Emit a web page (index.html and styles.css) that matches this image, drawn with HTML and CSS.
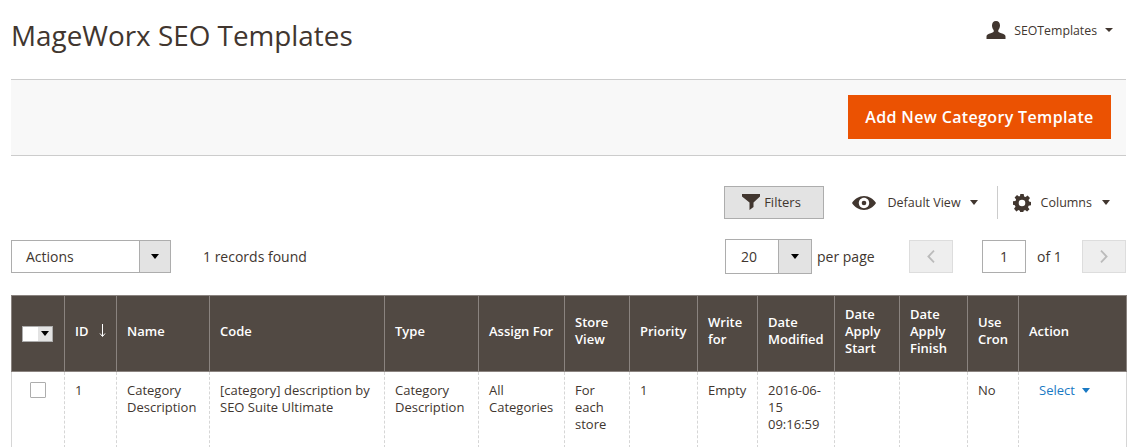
FILE: index.html
```html
<!DOCTYPE html>
<html lang="en">
<head>
<meta charset="utf-8">
<title>MageWorx SEO Templates</title>
<link rel="stylesheet" href="styles.css">
</head>
<body>
<div class="page">
  <header class="top">
    <h1 class="title">MageWorx SEO Templates</h1>
    <div class="user">
      <svg class="user-icon" width="20" height="18" viewBox="0 0 20 18"><path fill="#41362f" d="M10 0c2.600 0 4 1.900 4 4.400 0 1.900-.7 3.500-1.700 4.500v1.700c0 .6 1 1 3 1.700 2.400.8 4.200 1.500 4.200 3.100V18H.5v-2.600c0-1.600 1.800-2.300 4.200-3.100 2-.7 3-1.100 3-1.700V8.900C6.700 7.900 6 6.300 6 4.400 6 1.900 7.400 0 10 0z"/></svg>
      <span class="user-name">SEOTemplates</span>
      <span class="caret caret-small"></span>
    </div>
  </header>

  <div class="actions-bar">
    <button class="primary">Add New Category Template</button>
  </div>

  <div class="tools">
    <button class="filters">
      <svg width="18" height="16" viewBox="0 0 18 16"><path fill="#41362f" d="M0 0h18v2.500l-6.500 6V13L7.500 16V8.500L0 2.500z"/></svg>
      <span>Filters</span>
    </button>
    <div class="view">
      <svg width="24" height="14" viewBox="0 0 24 14"><path fill="#41362f" fill-rule="evenodd" d="M12 0c5 0 9.500 3 12 7-2.500 4-7 7-12 7S2.500 11 0 7c2.500-4 7-7 12-7zm0 1.800C9.100 1.800 6.800 4.100 6.800 7s2.300 5.200 5.200 5.200 5.200-2.300 5.200-5.200S14.900 1.800 12 1.800z"/><circle cx="12" cy="7" r="2.300" fill="#41362f"/></svg>
      <span class="view-label">Default View</span>
      <span class="caret"></span>
    </div>
    <div class="columns">
      <svg width="18" height="18" viewBox="0 0 18 18"><path fill="#41362f" fill-rule="evenodd" d="M7.300 0h3.400l.4 2.500 1.500.6 2-1.500 2.400 2.400-1.500 2 .6 1.500 2 .4v3.400l-2.500.4-.6 1.500 1.500 2-2.400 2.400-2-1.500-1.500.6-.4 2.500H7.300l-.4-2.500-1.500-.6-2 1.500L1 14.800l1.500-2-.6-1.500L0 10.800V7.300l2.500-.4.600-1.500-1.500-2L4 1l2 1.500 1-.5zM9 5.700a3.300 3.300 0 1 0 0 6.600 3.300 3.300 0 0 0 0-6.600z"/></svg>
      <span class="columns-label">Columns</span>
      <span class="caret"></span>
    </div>
  </div>

  <div class="pager-row">
    <div class="select select-actions">
      <span class="select-value">Actions</span>
      <span class="select-btn"><span class="caret caret-black"></span></span>
    </div>
    <span class="records">1 records found</span>
    <div class="pager">
      <div class="select select-page">
        <span class="select-value">20</span>
        <span class="select-btn"><span class="caret caret-black"></span></span>
      </div>
      <span class="per-page">per page</span>
      <button class="nav nav-prev"><svg width="8" height="13" viewBox="0 0 8 13"><path fill="none" stroke="#bbb" stroke-width="1.800" d="M7 .7 1.400 6.500 7 12.300"/></svg></button>
      <span class="page-input">1</span>
      <span class="of">of 1</span>
      <button class="nav nav-next"><svg width="8" height="13" viewBox="0 0 8 13"><path fill="none" stroke="#bbb" stroke-width="1.800" d="M1 .7 6.600 6.500 1 12.300"/></svg></button>
    </div>
  </div>

  <table class="grid">
    <colgroup>
      <col class="c-check"><col class="c-id"><col class="c-name"><col class="c-code"><col class="c-type"><col class="c-assign"><col class="c-store"><col class="c-priority"><col class="c-write"><col class="c-modified"><col class="c-start"><col class="c-finish"><col class="c-cron"><col class="c-action">
    </colgroup>
    <thead>
      <tr>
        <th class="th-check"><span class="mass"><span class="mass-box"></span><span class="mass-btn"><span class="caret caret-mass"></span></span></span></th>
        <th><span class="id-head">ID<svg class="sort" width="7" height="13" viewBox="0 0 7 13"><path fill="none" stroke="#fff" d="M3.500 0v12M1 9.500l2.500 3 2.500-3"/></svg></span></th>
        <th>Name</th>
        <th>Code</th>
        <th>Type</th>
        <th>Assign For</th>
        <th>Store View</th>
        <th>Priority</th>
        <th>Write for</th>
        <th>Date Modified</th>
        <th>Date Apply Start</th>
        <th>Date Apply Finish</th>
        <th>Use Cron</th>
        <th>Action</th>
      </tr>
    </thead>
    <tbody>
      <tr>
        <td class="td-check"><span class="checkbox"></span></td>
        <td>1</td>
        <td>Category Description</td>
        <td>[category] description by SEO Suite Ultimate</td>
        <td>Category Description</td>
        <td>All Categories</td>
        <td>For each store</td>
        <td>1</td>
        <td>Empty</td>
        <td>2016-06-15 09:16:59</td>
        <td></td>
        <td></td>
        <td>No</td>
        <td class="td-action"><a class="select-link" href="#">Select<span class="caret caret-blue"></span></a></td>
      </tr>
    </tbody>
  </table>
</div>
</body>
</html>
```
FILE: styles.css
```css
* { box-sizing: border-box; }
html, body { margin: 0; height: 447px; overflow: hidden; background: #fff; }
body { font-family: "Open Sans", sans-serif; font-size: 14px; color: #41362f; }
.page { padding: 0 12px 0 11px; }
button { font-family: inherit; padding: 0; cursor: pointer; }

.caret { display: inline-block; width: 0; height: 0; border-style: solid; border-width: 5px 4.500px 0; border-color: #41362f transparent transparent; }
.caret-small { border-width: 4px 4px 0; }
.caret-black { border-width: 5px 4px 0; border-color: #000 transparent transparent; }

.top { height: 79px; display: flex; justify-content: space-between; padding: 16px 13px 0 0; }
.title { margin: 0; font-size: 27.850px; font-weight: 400; line-height: 38px; color: #41362f; }
.user { display: flex; align-items: center; height: 28px; }
.user-icon { margin-right: 8px; }
.user-name { font-size: 12.300px; color: #41362f; margin-right: 8px; }

.actions-bar { height: 77px; border-top: 1px solid #ccc; border-bottom: 1px solid #ccc; background: #f8f8f8; display: flex; justify-content: flex-end; padding: 15px 15px 0 0; }
.primary { width: 263px; height: 44px; background: #eb5202; border: 0; color: #fff; font-size: 16px; font-weight: 600; letter-spacing: .35px; }

.tools { display: flex; align-items: center; justify-content: flex-end; height: 33px; margin-top: 30px; padding-right: 16px; }
.filters { width: 100px; height: 33px; background: #e3e3e3; border: 1px solid #adadad; display: flex; align-items: center; justify-content: center; gap: 4px; padding: 0 4px 2px 0; font-size: 13px; color: #41362f; margin-right: 28px; }
.view { display: flex; align-items: center; height: 33px; padding-right: 19px; border-right: 1px solid #ccc; }
.view-label { font-size: 12.500px; margin: 0 9px 0 12px; }
.columns { display: flex; align-items: center; height: 33px; padding-left: 15px; }
.columns-label { font-size: 12.500px; margin: 0 10px 0 10px; }

.pager-row { display: flex; align-items: center; height: 33px; margin-top: 21px; }
.select { display: flex; height: 33px; border: 1px solid #adadad; background: #fff; }
.select-value { flex: 1; display: flex; align-items: center; }
.select-btn { width: 31px; background: #e3e3e3; border-left: 1px solid #adadad; display: flex; align-items: center; justify-content: center; }
.select-actions { width: 160px; }
.select-actions .select-value { padding-left: 14px; }
.records { margin-left: 32px; }
.pager { margin-left: auto; display: flex; align-items: center; }
.select-page { width: 87px; height: 35px; }
.select-page .select-value { padding-left: 15px; }
.select-page .select-btn { width: 33px; }
.per-page { margin-left: 5px; width: 92px; }
.nav { width: 44px; height: 33px; background: #eee; border: 1px solid #ddd; display: flex; align-items: center; justify-content: center; }
.page-input { width: 44px; height: 33px; border: 1px solid #adadad; margin-left: 29px; display: flex; align-items: center; justify-content: center; }
.of { width: 56px; padding-left: 11px; }

.grid { width: 1115px; margin-top: 22px; border-collapse: collapse; table-layout: fixed; font-size: 13px; line-height: 17px; }
.c-check { width: 53px; } .c-id { width: 52px; } .c-name { width: 93px; } .c-code { width: 175px; }
.c-type { width: 94px; } .c-assign { width: 86px; } .c-store { width: 65px; } .c-priority { width: 68px; }
.c-write { width: 60px; } .c-modified { width: 77px; } .c-start { width: 65px; } .c-finish { width: 68px; }
.c-cron { width: 51px; } .c-action { width: 108px; }

.grid th { height: 76px; background: #514943; color: #fff; font-weight: 600; text-align: left; padding: 0 4px 5px 10px; border: 1px solid #8a837f; vertical-align: middle; }
.grid td { height: 76px; padding: 10px 6px 0 10px; vertical-align: top; border-left: 1px dashed #d6d6d6; border-right: 1px dashed #d6d6d6; }
.grid td:first-child { border-left: 1px solid #d6d6d6; }
.grid td:last-child { border-right: 1px solid #d6d6d6; }
.grid .th-check { padding: 0 0 0 10px; }
.mass { display: flex; width: 31px; height: 16px; background: #e3e3e3; border: 1px solid #adadad; }
.mass-box { width: 15px; background: #fff; }
.mass-btn { flex: 1; display: flex; align-items: center; justify-content: center; }
.caret-mass { border-width: 5px 4px 0; border-color: #000 transparent transparent; }
.id-head { display: flex; align-items: center; }
.sort { margin-left: 10px; margin-top: -2px; }
.grid .td-check { padding: 10px 0 0 18px; }
.checkbox { display: block; width: 16px; height: 16px; border: 1px solid #adadad; border-radius: 1px; }
.grid .td-action { padding-left: 20px; }
.select-link { color: #1979c3; text-decoration: none; display: inline-flex; align-items: center; gap: 7px; }
.caret-blue { border-color: #1979c3 transparent transparent; border-width: 5px 4.500px 0; }
```
